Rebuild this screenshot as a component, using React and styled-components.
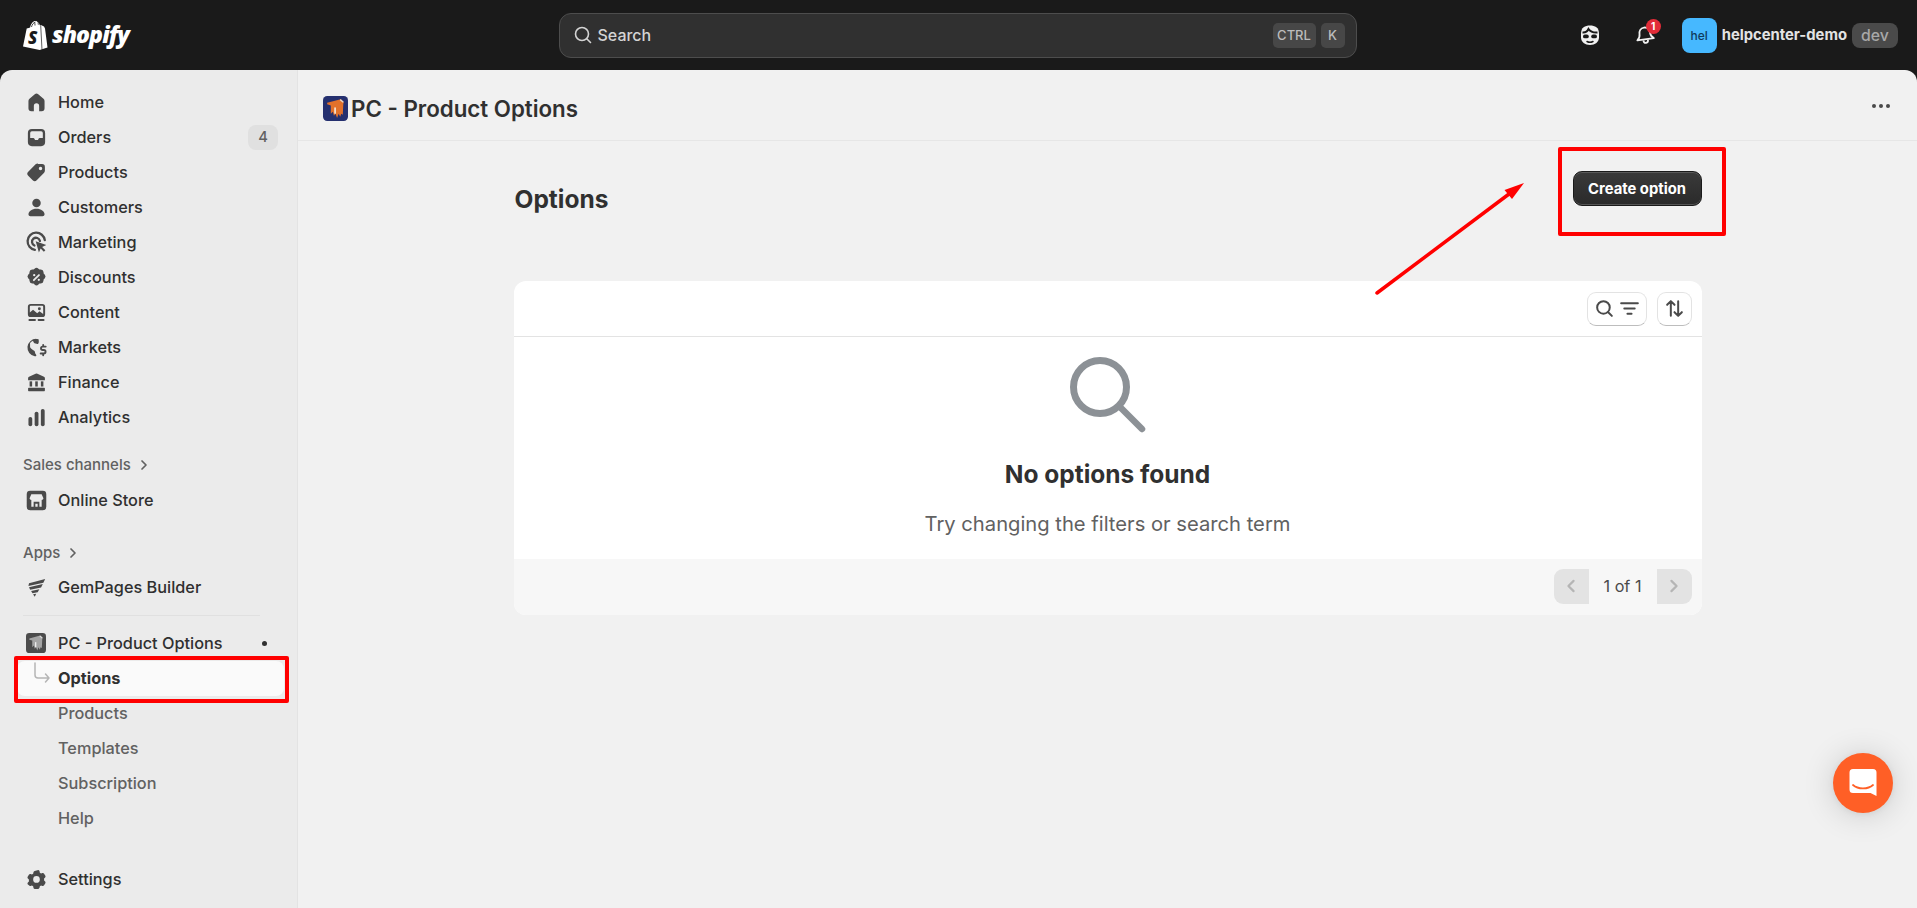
import React from "react";
import styled, { createGlobalStyle } from "styled-components";

const GlobalStyle = createGlobalStyle`
  * { box-sizing: border-box; }
  html, body { margin: 0; padding: 0; height: 100%; background: #1a1a1a; }
  body { font-family: Inter, "Liberation Sans", sans-serif; overflow: hidden; }
`;

const Ico = ({ size = 23, children, ...rest }) => (
  <svg width={size} height={size} viewBox="0 0 20 20" fill="currentColor" {...rest}>
    {children}
  </svg>
);

const HomeIcon = () => (
  <Ico>
    <path d="M8.500 2.900a2.300 2.300 0 0 1 3 0l4.600 3.900c.6.500.9 1.200.9 2V15a2.500 2.500 0 0 1-2.500 2.500h-2.200V13a2.300 2.300 0 0 0-4.600 0v4.500H5.500A2.500 2.500 0 0 1 3 15V8.800c0-.8.300-1.500.9-2z" />
  </Ico>
);
const OrdersIcon = () => (
  <Ico>
    <path
      fillRule="evenodd"
      d="M6 2.500h8A3.500 3.500 0 0 1 17.500 6v8a3.500 3.500 0 0 1-3.500 3.500H6A3.500 3.500 0 0 1 2.500 14V6A3.500 3.500 0 0 1 6 2.500zM4.500 6v4.500h2.800c.4 0 .7.2.9.6l.3.6c.1.300.4.500.7.500h1.600c.3 0 .6-.2.7-.5l.3-.6c.2-.4.5-.6.900-.6h2.800V6A1.500 1.500 0 0 0 14 4.500H6A1.500 1.500 0 0 0 4.500 6z"
    />
  </Ico>
);
const TagIcon = () => (
  <Ico>
    <path
      fillRule="evenodd"
      d="M11.500 2.700h3.300a2.500 2.500 0 0 1 2.500 2.500v3.300c0 .7-.3 1.300-.7 1.800l-6.400 6.400a2.500 2.500 0 0 1-3.500 0l-3.900-3.900a2.500 2.500 0 0 1 0-3.500l6.400-6.400c.5-.4 1.100-.7 1.800-.7zM13.500 8a1.500 1.500 0 1 0 0-3 1.500 1.500 0 0 0 0 3z"
    />
  </Ico>
);
const PersonIcon = () => (
  <Ico>
    <circle cx="10" cy="6" r="3.700" />
    <path d="M10 11c-4 0-7 2.200-7 4.800 0 1 .8 1.700 1.700 1.700h10.600c.9 0 1.700-.7 1.700-1.700 0-2.600-3-4.800-7-4.800z" />
  </Ico>
);
const MarketingIcon = () => (
  <Ico>
    <path fill="none" stroke="currentColor" strokeWidth="2" strokeLinecap="round" d="M8.600 16.400A7.500 7.500 0 1 1 17.200 8" />
    <path fill="none" stroke="currentColor" strokeWidth="2" strokeLinecap="round" d="M8.200 12.600A3.500 3.500 0 1 1 13 8.600" />
    <path d="M9.300 8.900l9.200 3.300-3.600 1.700 2.800 2.800-1.300 1.300-2.800-2.800-1.500 3.600z" />
  </Ico>
);
const DiscountIcon = () => (
  <Ico>
    <path
      fillRule="evenodd"
      d="M8.300 2.300a2.500 2.500 0 0 1 3.400 0l.9.800 1.200-.1a2.500 2.500 0 0 1 2.300 2.300l.1 1.200.9.900a2.500 2.500 0 0 1 0 3.400l-.9.900-.1 1.200a2.500 2.500 0 0 1-2.300 2.300l-1.200.1-.9.800a2.500 2.500 0 0 1-3.400 0l-.9-.8-1.200-.1a2.500 2.500 0 0 1-2.300-2.300l-.1-1.200-.9-.9a2.500 2.500 0 0 1 0-3.400l.9-.9.1-1.200A2.500 2.500 0 0 1 6.200 3l1.200.1zM12.700 7.300a.8.800 0 0 0-1.100 0l-4.300 4.300a.8.800 0 1 0 1.100 1.100l4.300-4.300a.8.800 0 0 0 0-1.100zM8 9a1 1 0 1 0 0-2 1 1 0 0 0 0 2zm4 4a1 1 0 1 0 0-2 1 1 0 0 0 0 2z"
    />
  </Ico>
);
const ContentIcon = () => (
  <Ico>
    <path
      fillRule="evenodd"
      d="M5 2.500h10A2.500 2.500 0 0 1 17.500 5v6.500A2.500 2.500 0 0 1 15 14H5a2.500 2.500 0 0 1-2.500-2.500V5A2.500 2.500 0 0 1 5 2.500zM5 4.200a.8.800 0 0 0-.8.800v5l2.800-2.400 3.600 3 2-1.600 3.200 2.200V5a.8.800 0 0 0-.8-.8zM12.500 8a1.300 1.300 0 1 0 0-2.600 1.300 1.300 0 0 0 0 2.600z"
    />
    <rect x="3" y="15.700" width="6.500" height="1.700" rx=".8" />
    <rect x="11" y="15.700" width="6" height="1.700" rx=".8" />
  </Ico>
);
const MarketsIcon = () => (
  <Ico>
    <path d="M9.800 2.500a7.600 7.600 0 0 0-1.300 15.100l.8-.1c.5-.1.700-.6.500-1-.5-1-1.100-1.400-1.100-2.400 0-.9-.8-1.300-1.500-1.700L5.500 11c-.6-.4-1.100-1-1.100-1.800V6.100a7 7 0 0 1 2.500-2c.3.900.9 2.200 2.200 2.500 1 .2 1.800.9 2.500 0 .5-.7.500-2.400.2-3.800-.8-.2-1.500-.3-2-.3z" />
    <path
      fill="none"
      stroke="currentColor"
      strokeWidth="1.600"
      strokeLinecap="round"
      d="M18 9.200h-2.600a1.500 1.500 0 0 0 0 3h1a1.500 1.500 0 0 1 0 3H13.600M15.800 7.800v1.300M15.800 15.300v1.500"
    />
  </Ico>
);
const FinanceIcon = () => (
  <Ico>
    <path d="M9.200 2.300a2 2 0 0 1 1.600 0l5.700 2.700c.5.200.8.700.8 1.300V8H2.700V6.300c0-.6.300-1.100.8-1.300z" />
    <rect x="4" y="9" width="2.200" height="4.500" />
    <rect x="8.900" y="9" width="2.200" height="4.500" />
    <rect x="13.800" y="9" width="2.200" height="4.500" />
    <rect x="2.700" y="14.500" width="14.600" height="3" rx=".6" />
  </Ico>
);
const AnalyticsIcon = () => (
  <Ico>
    <rect x="3" y="9.500" width="3.300" height="8" rx="1.600" />
    <rect x="8.400" y="5" width="3.300" height="12.500" rx="1.600" />
    <rect x="13.800" y="2.500" width="3.300" height="15" rx="1.600" />
  </Ico>
);
const StoreIcon = () => (
  <Ico>
    <path
      fillRule="evenodd"
      d="M4.500 1.500h11a3 3 0 0 1 3 3v11a3 3 0 0 1-3 3h-11a3 3 0 0 1-3-3v-11a3 3 0 0 1 3-3zM5.500 4.500 4 8c0 .9.800 1.500 1.500 1.500v6h9v-6c.7 0 1.500-.6 1.500-1.500l-1.500-3.500zM7.500 11h5v4.500h-1.500V12.800H9v2.700H7.500z"
    />
  </Ico>
);
const GemIcon = () => (
  <Ico>
    <path d="M17.500 2.500 16 5.800 3 8.800l.5-2.600z" />
    <path d="M15.500 7 14 10 4.500 12 3.500 9.800z" />
    <path d="M12.500 11.500 11 14.200 6.500 15 5.300 13z" />
    <path d="M9.700 15.400 8.500 18 7 15.900z" />
  </Ico>
);
const GearIcon = () => (
  <Ico>
    <path
      fillRule="evenodd"
      d="M11.600 1.800c.6.100 1 .6 1.100 1.200l.2 1.200 1.100.6 1.100-.4c.6-.2 1.200 0 1.500.5l1.100 1.900c.3.500.2 1.100-.2 1.500l-.9.800v1.800l.9.800c.4.400.5 1 .2 1.500l-1.100 1.900c-.3.500-.9.700-1.500.5l-1.100-.4-1.100.6-.2 1.200c-.1.600-.6 1-1.100 1.200H8.400c-.6-.1-1-.6-1.100-1.200l-.2-1.200-1.100-.6-1.100.4c-.6.2-1.200 0-1.500-.5L2.300 14.100c-.3-.5-.2-1.100.2-1.500l.9-.8V10l-.9-.8C2.100 8.800 2 8.200 2.300 7.700l1.100-1.900c.3-.5.900-.7 1.500-.5L6 5.700l1.100-.6.200-1.200c.1-.6.600-1 1.100-1.200zM10 12.800a2.900 2.900 0 1 0 0-5.800 2.900 2.900 0 0 0 0 5.800z"
    />
  </Ico>
);
const Chevron = ({ color = "#616161", size = 14, dir = "right" }) => (
  <svg width={size} height={size} viewBox="0 0 14 14" fill="none" stroke={color} strokeWidth="1.700" strokeLinecap="round" strokeLinejoin="round">
    <path d={dir === "right" ? "M5 3l4 4-4 4" : "M9 3 5 7l4 4"} />
  </svg>
);

const AppLogo = ({ gray, size }) => (
  <svg width={size} height={size} viewBox="0 0 24 24">
    <rect width="24" height="24" rx="4" fill={gray ? "#4c4c4c" : "#25306f"} />
    <path d="M4 6.500 17 3l3 3-.5 1.500-.5 10.500-1.500-1-1 3-1.500-3-1.500 4-1.500-4-1.500 2-1-4-2 2V9L4 8z" fill={gray ? "#a5a5a5" : "#e2712b"} />
    <path d="M16.500 3.500 19.500 6" stroke={gray ? "#ddd" : "#e9d6c4"} strokeWidth="1.400" />
    <rect x="10.800" y="11" width="1.600" height="6" fill={gray ? "#eee" : "#f7e8da"} />
  </svg>
);

const App = () => (
  <Root>
    <GlobalStyle />
    <TopBar>
      <Logo>
        <svg width="27" height="31" viewBox="0 0 27 31">
          <path d="M1 26.500 4.700 8.500c1.500-.5 2.600-.8 3.400-1C9 3.500 11 1 13.500 1c1.200 0 2 .6 2.500 1.500.6 0 1.300.8 1.700 2.800l1.300-.3 3 1.500 1 2 2.500 19-7.800 2.500z" fill="#fff" />
          <path d="M9.500 7c.5-2.500 2-4.500 4-5" fill="none" stroke="#1a1a1a" strokeWidth=".8" />
          <path d="M13 5.500c0-1 0-2.200-.4-3M16.300 4.700c0-.6 0-1.300-.3-2" fill="none" stroke="#1a1a1a" strokeWidth=".8" />
          <path d="M18.700 5.200 20 29.800" stroke="#1a1a1a" strokeWidth=".7" />
          <text x="6" y="24" fontFamily="Open Sans, sans-serif" fontWeight="800" fontStyle="italic" fontSize="17" fill="#1a1a1a">S</text>
        </svg>
        <LogoText>shopify</LogoText>
      </Logo>
      <SearchBox>
        <svg width="20" height="20" viewBox="0 0 20 20" fill="none" stroke="#d4d4d4" strokeWidth="1.600" strokeLinecap="round">
          <circle cx="9" cy="9" r="6.500" />
          <path d="M14 14l3.500 3.500" />
        </svg>
        <SearchText>Search</SearchText>
        <Keys>
          <Key $w={43}>CTRL</Key>
          <Key $w={24}>K</Key>
        </Keys>
      </SearchBox>
      <TopRight>
        <TopIcon>
          <svg width="24" height="24" viewBox="0 0 24 24">
            <path d="M12 2.500c5 0 9 1.800 9 8.500v3.500c0 4.500-4 7.500-9 7.500s-9-3-9-7.500V11c0-6.700 4-8.500 9-8.500z" fill="#f1f1f1" />
            <path d="M4.500 9.500c3 .2 5-1.200 6-3.500 1.500 2.300 5 3.800 9 3.500" fill="none" stroke="#1a1a1a" strokeWidth="2" />
            <rect x="5" y="11.500" width="5.800" height="3.800" rx="1.900" fill="#1a1a1a" />
            <rect x="13.200" y="11.500" width="5.800" height="3.800" rx="1.900" fill="#1a1a1a" />
            <path d="M9 18.500c2 1 4 1 6 0" stroke="#1a1a1a" strokeWidth="1.500" strokeLinecap="round" fill="none" />
          </svg>
        </TopIcon>
        <TopIcon $wide>
          <svg width="24" height="24" viewBox="0 0 24 24" fill="none" stroke="#f1f1f1" strokeWidth="1.800" strokeLinejoin="round">
            <g transform="rotate(-8 12 12)">
              <path d="M12 4.500c-3.600 0-5.300 2.800-5.300 5.800 0 3-1 4.500-3 6h16.600c-2-1.500-3-3-3-6 0-3-1.700-5.800-5.300-5.800z" />
              <path d="M9.700 17c0 1.800 1 3 2.300 3s2.300-1.200 2.300-3" />
            </g>
          </svg>
          <NotifBadge>1</NotifBadge>
        </TopIcon>
        <Avatar>hel</Avatar>
        <StoreName>helpcenter-demo</StoreName>
        <DevChip>dev</DevChip>
      </TopRight>
    </TopBar>

    <Body>
      <Sidebar>
        <NavRow icon={<HomeIcon />} label="Home" />
        <NavRow icon={<OrdersIcon />} label="Orders" badge="4" />
        <NavRow icon={<TagIcon />} label="Products" />
        <NavRow icon={<PersonIcon />} label="Customers" />
        <NavRow icon={<MarketingIcon />} label="Marketing" />
        <NavRow icon={<DiscountIcon />} label="Discounts" />
        <NavRow icon={<ContentIcon />} label="Content" />
        <NavRow icon={<MarketsIcon />} label="Markets" />
        <NavRow icon={<FinanceIcon />} label="Finance" />
        <NavRow icon={<AnalyticsIcon />} label="Analytics" />

        <SectionLabel $top={18} $bottom={6}>
          Sales channels <Chevron />
        </SectionLabel>
        <NavRow icon={<StoreIcon />} label="Online Store" />

        <SectionLabel $top={23} $bottom={5}>
          Apps <Chevron />
        </SectionLabel>
        <NavRow icon={<GemIcon />} label="GemPages Builder" />
        <SideDivider />
        <NavRow icon={<AppLogo gray size={20} />} label="PC - Product Options" dot />
        <SelectedRow>
          <svg width="18" height="26" viewBox="0 0 18 26" fill="none" stroke="#b5b5b5" strokeWidth="1.500" strokeLinecap="round" strokeLinejoin="round">
            <path d="M1 1v12a3 3 0 0 0 3 3h11M11.500 12l3.500 4-3.500 4" />
          </svg>
          Options
        </SelectedRow>
        <SubRow>Products</SubRow>
        <SubRow>Templates</SubRow>
        <SubRow>Subscription</SubRow>
        <SubRow>Help</SubRow>
        <Spacer />
        <NavRow icon={<GearIcon />} label="Settings" />
      </Sidebar>

      <Main>
        <PageHeader>
          <AppLogo size={25} />
          <PageHeaderTitle>PC - Product Options</PageHeaderTitle>
          <MoreDots>
            <i />
            <i />
            <i />
          </MoreDots>
        </PageHeader>
        <Content>
          <TitleBar>
            <PageTitle>Options</PageTitle>
            <PrimaryButton>Create option</PrimaryButton>
          </TitleBar>
          <Card>
            <Toolbar>
              <ToolButton $w={60}>
                <svg width="21" height="21" viewBox="0 0 20 20" fill="none" stroke="#4a4a4a" strokeWidth="1.900" strokeLinecap="round">
                  <circle cx="9" cy="9" r="6" />
                  <path d="M13.500 13.500l3.500 3.500" />
                </svg>
                <svg width="21" height="21" viewBox="0 0 20 20" fill="none" stroke="#4a4a4a" strokeWidth="1.800" strokeLinecap="round">
                  <path d="M2 5h16M5 10h10M8 15h4" />
                </svg>
              </ToolButton>
              <ToolButton $w={35}>
                <svg width="21" height="21" viewBox="0 0 20 20" fill="none" stroke="#4a4a4a" strokeWidth="1.900" strokeLinecap="round" strokeLinejoin="round">
                  <path d="M6.500 17V3M3 6.500 6.500 3 10 6.500M13.500 3v14M10 13.500l3.500 3.500 3.500-3.500" />
                </svg>
              </ToolButton>
            </Toolbar>
            <EmptyState>
              <svg width="76" height="76" viewBox="0 0 76 76" fill="none" stroke="#8c9196" strokeLinecap="round">
                <circle cx="30" cy="30" r="26.500" strokeWidth="7" />
                <path d="M51 51l21 21" strokeWidth="6.500" />
              </svg>
              <EmptyTitle>No options found</EmptyTitle>
              <EmptyText>Try changing the filters or search term</EmptyText>
            </EmptyState>
            <CardFooter>
              <PageButton $side="left">
                <Chevron color="#b5b5b5" size={18} dir="left" />
              </PageButton>
              <PageLabel>1 of 1</PageLabel>
              <PageButton $side="right">
                <Chevron color="#b5b5b5" size={18} />
              </PageButton>
            </CardFooter>
          </Card>
        </Content>
      </Main>
    </Body>

    <SideHighlight />
    <CreateHighlight />
    <ArrowLayer width="170" height="130" viewBox="0 0 170 130">
      <path d="M2 125 138 23" stroke="#f00" strokeWidth="3.500" strokeLinecap="round" fill="none" />
      <path d="M149 15 129.500 22 137 31z" fill="#f00" />
    </ArrowLayer>
    <ChatBubble>
      <svg width="30" height="32" viewBox="0 0 30 32">
        <path d="M5 2h20a3.500 3.500 0 0 1 3.500 3.500V29l-6-3H5a3.500 3.500 0 0 1-3.500-3.500v-17A3.500 3.500 0 0 1 5 2z" fill="#fff" />
        <path d="M5 18c5 4.500 15 4.500 20 0" fill="none" stroke="#ff5f26" strokeWidth="1.800" strokeLinecap="round" />
      </svg>
    </ChatBubble>
  </Root>
);

const NavRow = ({ icon, label, badge, dot }) => (
  <Row>
    <RowIcon>{icon}</RowIcon>
    {label}
    {badge && <RowBadge>{badge}</RowBadge>}
    {dot && <RowDot />}
  </Row>
);

export default App;

const Root = styled.div`
  position: relative;
  width: 1917px;
  height: 908px;
  overflow: hidden;
  background: #1a1a1a;
`;

const TopBar = styled.header`
  height: 70px;
  display: grid;
  grid-template-columns: 1fr 798px 1fr;
  align-items: center;
  padding: 0 20px 0 18px;
`;

const Logo = styled.div`
  display: flex;
  align-items: center;
  gap: 3px;
  margin-left: 4px;
`;

const LogoText = styled.span`
  font-family: "Open Sans", sans-serif;
  font-style: italic;
  font-weight: 800;
  font-size: 23px;
  letter-spacing: -0.9px;
  color: #fff;
  margin-top: -3px;
`;

const SearchBox = styled.div`
  height: 45px;
  display: flex;
  align-items: center;
  padding: 0 11px 0 13px;
  background: #303030;
  border: 1px solid #4d4d4d;
  border-radius: 12px;
`;

const SearchText = styled.span`
  margin-left: 5px;
  font-size: 16px;
  font-weight: 450;
  color: #d4d4d4;
`;

const Keys = styled.div`
  margin-left: auto;
  display: flex;
  gap: 5px;
`;

const Key = styled.span`
  width: ${(p) => p.$w}px;
  height: 25px;
  display: flex;
  align-items: center;
  justify-content: center;
  background: #474747;
  border-radius: 5px;
  font-size: 13px;
  font-weight: 550;
  color: #bcbcbc;
`;

const TopRight = styled.div`
  display: flex;
  align-items: center;
  justify-content: flex-end;
  margin-right: -1px;
`;

const TopIcon = styled.div`
  position: relative;
  width: 24px;
  height: 24px;
  margin-right: ${(p) => (p.$wide ? 25 : 31)}px;
`;

const NotifBadge = styled.span`
  position: absolute;
  top: -4px;
  left: 13px;
  width: 15px;
  height: 15px;
  border-radius: 50%;
  background: #e22c38;
  color: #fff;
  font-size: 10px;
  font-weight: 700;
  line-height: 15px;
  text-align: center;
`;

const Avatar = styled.div`
  width: 35px;
  height: 35px;
  border-radius: 8px;
  background: #46b8ff;
  color: #0f3a5c;
  font-size: 12px;
  font-weight: 450;
  display: flex;
  align-items: center;
  justify-content: center;
`;

const StoreName = styled.span`
  margin-left: 5px;
  font-size: 14.800px;
  font-weight: 650;
  color: #e3e3e3;
  white-space: nowrap;
`;

const DevChip = styled.span`
  margin-left: 5px;
  width: 46px;
  height: 25px;
  display: flex;
  align-items: center;
  justify-content: center;
  border-radius: 8px;
  background: #4a4a4a;
  color: #a8a8a8;
  font-size: 15.800px;
  font-weight: 450;
`;

const Body = styled.div`
  display: flex;
  height: 838px;
  border-radius: 12px 12px 0 0;
  overflow: hidden;
`;

const Sidebar = styled.nav`
  width: 298px;
  flex: none;
  display: flex;
  flex-direction: column;
  padding: 14.500px 0 0;
  background: #ebebeb;
  box-shadow: inset -1px 0 0 #e3e3e3;
`;

const Row = styled.div`
  height: 35px;
  flex: none;
  display: flex;
  align-items: center;
  padding: 0 20px 0 24.500px;
  font-size: 16.300px;
  font-weight: 550;
  color: #303030;
`;

const RowIcon = styled.span`
  width: 23px;
  height: 23px;
  margin-right: 10.500px;
  color: #4a4a4a;
  display: flex;
  align-items: center;
  justify-content: center;
`;

const RowBadge = styled.span`
  margin-left: auto;
  width: 30px;
  height: 25px;
  border-radius: 8px;
  background: #e0e0e0;
  color: #616161;
  font-size: 14.700px;
  display: flex;
  align-items: center;
  justify-content: center;
`;

const RowDot = styled.span`
  margin-left: auto;
  margin-right: 11px;
  width: 5px;
  height: 5px;
  border-radius: 50%;
  background: #303030;
`;

const SectionLabel = styled.div`
  height: 24px;
  flex: none;
  margin-top: ${(p) => p.$top}px;
  margin-bottom: ${(p) => p.$bottom}px;
  padding-left: 23px;
  display: flex;
  align-items: center;
  gap: 6px;
  font-size: 15px;
  font-weight: 550;
  color: #616161;
`;

const SideDivider = styled.div`
  flex: none;
  height: 1px;
  margin: 10px 38px 10px 23px;
  background: #e0e0e0;
`;

const SelectedRow = styled.div`
  height: 35px;
  flex: none;
  margin: 0 14px 0 17px;
  padding-left: 17px;
  display: flex;
  align-items: center;
  gap: 6px;
  position: relative;
  background: #fafafa;
  border-radius: 8px;
  font-size: 16.300px;
  font-weight: 650;
  color: #303030;

  svg {
    margin-top: -6px;
    margin-left: 0;
  }
`;

const SubRow = styled.div`
  height: 35px;
  flex: none;
  padding-left: 58px;
  display: flex;
  align-items: center;
  font-size: 16.300px;
  font-weight: 550;
  color: #616161;
`;

const Spacer = styled.div`
  height: 26px;
  flex: none;
`;

const Main = styled.main`
  flex: 1;
  min-width: 0;
  background: #f1f1f1;
`;

const PageHeader = styled.div`
  height: 71px;
  display: flex;
  align-items: center;
  gap: 3px;
  padding: 6px 27px 0 25px;
  border-bottom: 1px solid #e6e6e6;
`;

const PageHeaderTitle = styled.h2`
  margin: 0;
  font-size: 22.300px;
  font-weight: 600;
  color: #303030;
`;

const MoreDots = styled.div`
  margin-left: auto;
  margin-top: -5px;
  display: flex;
  gap: 3px;

  i {
    display: block;
    width: 4px;
    height: 4px;
    border-radius: 50%;
    background: #4a4a4a;
  }
`;

const Content = styled.div`
  width: 1188px;
  margin: 0 auto;
  padding-top: 30px;
`;

const TitleBar = styled.div`
  height: 35px;
  display: flex;
  align-items: flex-start;
  justify-content: space-between;
  margin-bottom: 75px;
`;

const PageTitle = styled.h1`
  margin: 13px 0 0 1px;
  font-size: 24.500px;
  line-height: 30px;
  font-weight: 700;
  color: #303030;
`;

const PrimaryButton = styled.button`
  width: 129px;
  height: 35px;
  border: 1px solid #1a1a1a;
  border-radius: 9px;
  background: linear-gradient(#3a3a3a, #2a2a2a);
  box-shadow: inset 0 1px 0 #5a5a5a, inset 0 -1px 0 #555;
  color: #fff;
  font-family: inherit;
  font-size: 14.800px;
  font-weight: 650;
`;

const Card = styled.section`
  height: 334px;
  display: flex;
  flex-direction: column;
  background: #fff;
  border-radius: 12px;
  overflow: hidden;
`;

const Toolbar = styled.div`
  height: 56px;
  flex: none;
  display: flex;
  align-items: center;
  justify-content: flex-end;
  gap: 10px;
  padding: 0 10px 0 0;
  border-bottom: 1px solid #e3e3e3;
`;

const ToolButton = styled.button`
  width: ${(p) => p.$w}px;
  height: 34px;
  padding: 0;
  display: flex;
  align-items: center;
  justify-content: center;
  gap: 4px;
  background: #fff;
  border: 1px solid #e3e3e3;
  border-bottom-color: #bdbdbd;
  border-radius: 9px;
`;

const EmptyState = styled.div`
  flex: 1;
  display: flex;
  flex-direction: column;
  align-items: center;
  padding-top: 20px;
`;

const EmptyTitle = styled.h3`
  margin: 25px 0 0;
  font-size: 24.500px;
  line-height: 32px;
  font-weight: 700;
  color: #303030;
`;

const EmptyText = styled.p`
  margin: 20px 0 0;
  font-size: 20.200px;
  line-height: 28px;
  font-weight: 400;
  color: #616161;
`;

const CardFooter = styled.div`
  height: 56px;
  flex: none;
  display: flex;
  align-items: center;
  justify-content: flex-end;
  padding: 0 10px 2px 0;
  background: #f7f7f7;
`;

const PageButton = styled.div`
  width: 35px;
  height: 35px;
  display: flex;
  align-items: center;
  justify-content: center;
  background: #e3e3e3;
  border-radius: ${(p) => (p.$side === "left" ? "9px 0 0 9px" : "0 9px 9px 0")};
`;

const PageLabel = styled.span`
  width: 68px;
  text-align: center;
  font-size: 16.200px;
  color: #4a4a4a;
`;

const SideHighlight = styled.div`
  position: absolute;
  left: 14px;
  top: 656px;
  width: 275px;
  height: 47px;
  border: 4px solid #f00;
  border-radius: 2px;
`;

const CreateHighlight = styled.div`
  position: absolute;
  left: 1558px;
  top: 147px;
  width: 168px;
  height: 89px;
  border: 4px solid #f00;
  border-radius: 2px;
`;

const ArrowLayer = styled.svg`
  position: absolute;
  left: 1375px;
  top: 168px;
`;

const ChatBubble = styled.div`
  position: absolute;
  left: 1833px;
  top: 753px;
  width: 60px;
  height: 60px;
  border-radius: 50%;
  background: #ff5f26;
  box-shadow: 0 1px 6px rgba(0, 0, 0, 0.06), 0 2px 32px rgba(0, 0, 0, 0.16);
  display: flex;
  align-items: center;
  justify-content: center;
`;
